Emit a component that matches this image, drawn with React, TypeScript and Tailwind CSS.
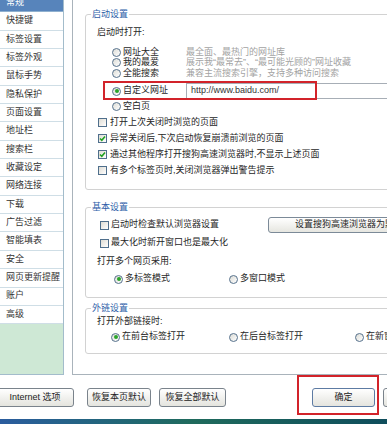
import React from "react";

const sideItems = [
  "常规",
  "快捷键",
  "标签设置",
  "标签外观",
  "鼠标手势",
  "隐私保护",
  "页面设置",
  "地址栏",
  "搜索栏",
  "收藏设定",
  "网络连接",
  "下载",
  "广告过滤",
  "智能填表",
  "安全",
  "网页更新提醒",
  "账户",
  "高级",
];

function Radio({ checked = false }: { checked?: boolean }) {
  return (
    <span className="w-[9px] h-[9px] shrink-0 rounded-full border border-[#56718c] bg-gradient-to-br from-[#dcdcd6] to-white flex items-center justify-center">
      {checked && <span className="w-[4px] h-[4px] rounded-full bg-[#2aa52a]" />}
    </span>
  );
}

function Check({ checked = false }: { checked?: boolean }) {
  return (
    <span className="w-[9px] h-[9px] shrink-0 border border-[#4f6f8c] bg-gradient-to-br from-[#dedcd4] to-white flex items-center justify-center">
      {checked && (
        <svg width="7" height="7" viewBox="0 0 7 7">
          <path d="M1 3.5 L2.8 5.3 L6 1.5" stroke="#21a121" strokeWidth="1.6" fill="none" />
        </svg>
      )}
    </span>
  );
}

function GroupBox({
  title,
  className,
  children,
}: {
  title: string;
  className: string;
  children: React.ReactNode;
}) {
  return (
    <div className={"relative border border-[#d2d2d2] rounded-[3px] w-[330px] ml-[12px] " + className}>
      <span className="absolute -top-[7px] left-[5px] bg-white px-[1px] leading-[12px] text-[#2d5ea8]">
        {title}
      </span>
      {children}
    </div>
  );
}

function Btn({ children, className }: { children: React.ReactNode; className: string }) {
  return (
    <div
      className={
        "h-[19px] shrink-0 rounded-[3px] border bg-gradient-to-b from-white to-[#e4e4de] flex items-center justify-center leading-none text-[#222] " +
        className
      }
    >
      {children}
    </div>
  );
}

export default function App() {
  return (
    <div className="relative w-[387px] h-[424px] overflow-hidden bg-white flex flex-col text-[9px] text-[#262626] font-['Liberation_Sans','Noto_Sans_CJK_SC',sans-serif]">
      {/* top area: sidebar + settings panel */}
      <div className="flex h-[375px] shrink-0">
        <div className="w-[64px] shrink-0 h-full border-r border-b border-[#a3bccb] overflow-hidden flex flex-col">
          <div className="-mt-[6px] flex flex-col">
            {sideItems.map((s, i) => (
              <div
                key={s}
                className={
                  i === 0
                    ? "h-[18.35px] shrink-0 pl-[6px] flex items-center bg-[#5784bb] text-white border-b border-[#8fb0cf]"
                    : "h-[18.35px] shrink-0 pl-[6px] flex items-center border-b border-[#cfdee6] text-[#333]"
                }
              >
                {s}
              </div>
            ))}
          </div>
          <div className="flex-1 bg-[#cee8d5]" />
        </div>

        <div className="ml-[8px] w-[330px] shrink-0 h-full border-l border-b border-[#a9b3bb] bg-white">
          <GroupBox title="启动设置" className="mt-[14px] h-[176px]">
            <div className="mt-[12px] h-[12px] pl-[11px] flex items-center">启动时打开:</div>
            <div className="mt-[8px] flex flex-col pl-[26px]">
              {[
                ["网址大全", "最全面、最热门的网址库"],
                ["我的最爱", "展示我\u201c最常去\u201d、\u201c最可能光顾的\u201d网址收藏"],
                ["全能搜索", "兼容主流搜索引擎，支持多种访问搜索"],
              ].map(([a, b]) => (
                <div key={a} className="h-[10.5px] flex items-center leading-none">
                  <div className="w-[74px] shrink-0 flex items-center gap-[2px]">
                    <Radio />
                    <span>{a}</span>
                  </div>
                  <span className="text-[#a3a3a3] whitespace-nowrap">{b}</span>
                </div>
              ))}
            </div>
            <div className="mt-[4.5px] h-[16px] pl-[26px] flex items-center">
              <div className="w-[74px] shrink-0 flex items-center gap-[2px]">
                <Radio checked />
                <span>自定义网址</span>
              </div>
              <div className="flex-1 h-[16px] border border-[#a7aeb6] flex items-center pl-[4px] text-[#333]">
                http://www.baidu.com/
              </div>
            </div>
            <div className="mt-[2px] h-[11px] pl-[26px] flex items-center gap-[2px]">
              <Radio />
              <span>空白页</span>
            </div>
            <div className="mt-[2.5px] flex flex-col pl-[12px]">
              {[
                ["打开上次关闭时浏览的页面", false],
                ["异常关闭后,下次启动恢复崩溃前浏览的页面", true],
                ["通过其他程序打开搜狗高速浏览器时,不显示上述页面", true],
                ["有多个标签页时,关闭浏览器弹出警告提示", false],
              ].map(([t, c]) => (
                <div key={t as string} className="h-[16px] flex items-center gap-[3px] whitespace-nowrap">
                  <Check checked={c as boolean} />
                  <span>{t as string}</span>
                </div>
              ))}
            </div>
          </GroupBox>

          <GroupBox title="基本设置" className="mt-[17px] h-[91px]">
            <div className="mt-[9px] h-[16px] flex items-center pl-[14px]">
              <div className="w-[168px] shrink-0 flex items-center gap-[2px]">
                <Check />
                <span>启动时检查默认浏览器设置</span>
              </div>
              <div className="w-[150px] h-[16px] shrink-0 rounded-[3px] border border-[#7c8a98] bg-gradient-to-b from-white to-[#e6e6e0] flex items-center pl-[26px] whitespace-nowrap">
                设置搜狗高速浏览器为默认浏览器
              </div>
            </div>
            <div className="mt-[2px] h-[16px] flex items-center gap-[2px] pl-[14px]">
              <Check />
              <span>最大化时新开窗口也是最大化</span>
            </div>
            <div className="mt-[5px] h-[12px] pl-[11px] flex items-center">打开多个网页采用:</div>
            <div className="mt-[5px] h-[12px] pl-[28px] flex items-center">
              <div className="w-[115px] shrink-0 flex items-center gap-[2px]">
                <Radio checked />
                <span>多标签模式</span>
              </div>
              <div className="flex items-center gap-[2px]">
                <Radio />
                <span>多窗口模式</span>
              </div>
            </div>
          </GroupBox>

          <GroupBox title="外链设置" className="mt-[10px] h-[46px]">
            <div className="mt-[7px] h-[12px] pl-[11px] flex items-center">打开外部链接时:</div>
            <div className="mt-[3px] h-[12px] pl-[25px] flex items-center whitespace-nowrap">
              <div className="w-[118px] shrink-0 flex items-center gap-[2px]">
                <Radio checked />
                <span>在前台标签打开</span>
              </div>
              <div className="w-[126px] shrink-0 flex items-center gap-[2px]">
                <Radio />
                <span>在后台标签打开</span>
              </div>
              <div className="flex items-center gap-[2px]">
                <Radio />
                <span>在新窗口打开</span>
              </div>
            </div>
          </GroupBox>
        </div>
      </div>

      {/* bottom buttons */}
      <div className="mt-[13px] flex items-center whitespace-nowrap">
        <Btn className="-ml-[4px] w-[78px] border-[#7a838c]">Internet 选项</Btn>
        <Btn className="ml-[13px] w-[64px] border-[#7a838c]">恢复本页默认</Btn>
        <Btn className="ml-[8px] w-[67px] border-[#7a838c]">恢复全部默认</Btn>
        <Btn className="ml-[86px] w-[63px] border-[#5d7ba3]">确定</Btn>
        <Btn className="ml-[8px] w-[63px] border-[#7a838c]">取消</Btn>
      </div>

      {/* taskbar edge */}
      <div className="mt-auto h-[5px] bg-gradient-to-r from-[#2b5c9e] via-[#1f6a5c] to-[#0f4d5c]" />

      {/* red annotation boxes */}
      <div className="absolute left-[103px] top-[81px] w-[214px] h-[19px] border-2 border-[#d2232a]" />
      <div className="absolute left-[297px] top-[375px] w-[82px] h-[40px] border-2 border-[#d2232a]" />
    </div>
  );
}
